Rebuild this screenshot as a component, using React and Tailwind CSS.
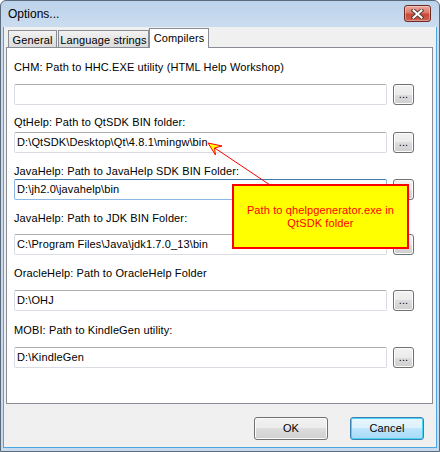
import React from 'react'

const font = "font-['Liberation_Sans',Arial,sans-serif]"

const fields = [
  { label: 'CHM: Path to HHC.EXE utility (HTML Help Workshop)', value: '', lm: 'mt-[13px]', im: 'mt-[10px]' },
  { label: 'QtHelp: Path to QtSDK BIN folder:', value: 'D:\\QtSDK\\Desktop\\Qt\\4.8.1\\mingw\\bin', lm: 'mt-[11px]', im: 'mt-[3px]' },
  { label: 'JavaHelp: Path to JavaHelp SDK BIN Folder:', value: 'D:\\jh2.0\\javahelp\\bin', lm: 'mt-[12px]', im: 'mt-[1px]', focus: true },
  { label: 'JavaHelp: Path to JDK BIN Folder:', value: 'C:\\Program Files\\Java\\jdk1.7.0_13\\bin', lm: 'mt-[12px]', im: 'mt-[9px]' },
  { label: 'OracleHelp: Path to OracleHelp Folder', value: 'D:\\OHJ', lm: 'mt-[12px]', im: 'mt-[10px]' },
  { label: 'MOBI: Path to KindleGen utility:', value: 'D:\\KindleGen', lm: 'mt-[13px]', im: 'mt-[10px]' },
]

function PathRow({ field }) {
  return (
    <>
      <div className={`${field.lm} h-[13px] leading-[13px] whitespace-nowrap`}>{field.label}</div>
      <div className={`${field.im} flex items-center`}>
        <div
          className={`w-[373px] h-[21px] rounded-[2px] border flex items-center px-[2px] whitespace-nowrap overflow-hidden ${
            field.focus
              ? 'border-[#8ab8e2] border-t-[#3d7bad]'
              : 'border-[#d9dde3] border-t-[#abadb3]'
          }`}
        >
          {field.value}
        </div>
        <div className="ml-[6px] w-[21px] h-[21px] rounded-[3px] border border-[#707070] bg-[linear-gradient(to_bottom,#f2f2f2_0%,#ebebeb_50%,#dddddd_50%,#cfcfcf_100%)] shadow-[inset_0_0_0_1px_#fcfcfc] flex items-center justify-center leading-none">
          ...
        </div>
      </div>
    </>
  )
}

export default function App() {
  return (
    <div className={`relative w-[440px] h-[452px] ${font} text-[11px] tracking-[0.12px] text-black`}>
      <div className="h-full flex flex-col border border-[#5b6a7b] rounded-t-[6px] px-[2px] pb-[3px] bg-[linear-gradient(to_bottom,#bcd3eb_0px,#cbdcef_26px,#c6d9ee_100%)]">
        {/* Title bar */}
        <div className="h-[26px] flex items-center justify-between pl-[5px] pr-[6px]">
          <span className="text-[12px] tracking-normal">Options...</span>
          <div className="w-[27px] h-[17px] mt-[-1px] rounded-[3px] border border-[#6b2a22] bg-[linear-gradient(to_bottom,#eaa99d_0%,#dc7a6b_45%,#c8483a_55%,#d0604e_100%)] shadow-[inset_0_0_0_1px_rgba(255,255,255,0.35)] flex items-center justify-center">
            <svg width="13" height="10" viewBox="0 0 13 10">
              <path d="M2.5 1.5 L10.5 8.5 M10.5 1.5 L2.5 8.5" stroke="#5a3a36" strokeWidth="4" strokeLinecap="square" />
              <path d="M2.5 1.5 L10.5 8.5 M10.5 1.5 L2.5 8.5" stroke="#ffffff" strokeWidth="2" strokeLinecap="square" />
            </svg>
          </div>
        </div>

        {/* Client area */}
        <div className="flex-1 border border-t-0 border-[#4aa6e0] bg-[#f0f0f0] pt-[1px] pl-[2px]">
          {/* Tabs */}
          <div className="relative z-10 -mb-px ml-[2px] h-[20px] flex items-end">
            <div className="w-[49px] h-[17px] mb-[1px] border border-b-0 border-[#898c95] bg-[linear-gradient(to_bottom,#f2f2f2,#dbdbdb)] flex items-center justify-center pt-[2px]">
              General
            </div>
            <div className="ml-[1px] w-[91px] h-[17px] mb-[1px] border border-b-0 border-[#898c95] bg-[linear-gradient(to_bottom,#f2f2f2,#dbdbdb)] flex items-center justify-center pt-[2px]">
              Language strings
            </div>
            <div className="w-[60px] h-[20px] border border-b-0 border-[#898c95] bg-white flex items-center justify-center">
              Compilers
            </div>
          </div>

          {/* Panel */}
          <div className="w-[427px] h-[357px] border border-[#898c95] bg-white pl-[7px] flex flex-col">
            {fields.map((f) => (
              <PathRow key={f.label} field={f} />
            ))}
          </div>

          {/* Dialog buttons */}
          <div className="mt-[13px] flex justify-end gap-[22px] pr-[12px]">
            <div className="w-[74px] h-[23px] rounded-[3px] border border-[#707070] bg-[linear-gradient(to_bottom,#f2f2f2_0%,#ebebeb_50%,#dddddd_50%,#cfcfcf_100%)] shadow-[inset_0_0_0_1px_#fbfbfb] flex items-center justify-center">
              OK
            </div>
            <div className="w-[74px] h-[23px] rounded-[3px] border border-[#3c7fb1] bg-[linear-gradient(to_bottom,#eaf6fd_0%,#d9f0fc_50%,#bee6fd_50%,#a7d9f5_100%)] shadow-[inset_0_0_0_1px_#48d4f4] flex items-center justify-center">
              Cancel
            </div>
          </div>
        </div>
      </div>

      {/* Annotation arrow */}
      <svg className="absolute left-0 top-0 pointer-events-none" width="440" height="452" viewBox="0 0 440 452">
        <line x1="214" y1="147.5" x2="270" y2="185" stroke="#ff0000" strokeWidth="1" />
        <polygon points="208,143 222,146 214.5,148 215.5,155" fill="#ffff00" stroke="#ff0000" strokeWidth="1" strokeLinejoin="miter" />
      </svg>

      {/* Annotation callout */}
      <div className="absolute left-[232px] top-[184px] w-[177px] h-[65px] border-2 border-[#ff0000] bg-[#ffff00] text-[#ff0000] text-[11px] leading-[13px] text-center flex items-center justify-center">
        Path to qhelpgenerator.exe in
        <br />
        QtSDK folder
      </div>
    </div>
  )
}
